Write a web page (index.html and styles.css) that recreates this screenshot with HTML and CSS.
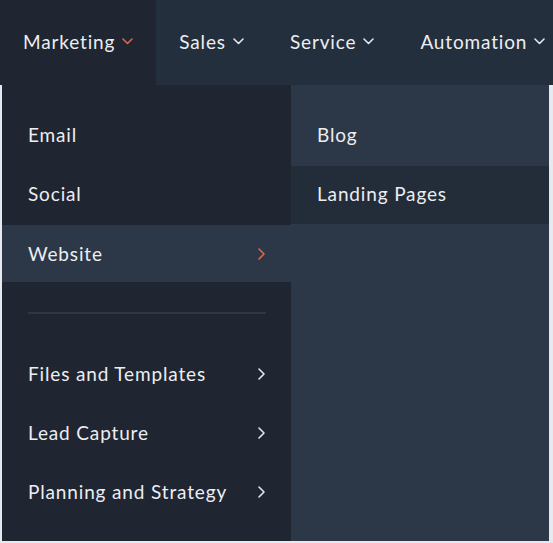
FILE: index.html
```html
<!DOCTYPE html>
<html>

<head>
    <meta name="viewport" content="width=device-width, initial-scale=1">
    <link rel="stylesheet" href="styles.css">
</head>

<body>

    <nav class="topnav">
        <a class="nav-item open">Marketing
            <svg class="caret-down" width="11" height="7" viewBox="0 0 11 7"><polyline points="1,1 5.5,5.5 10,1" /></svg>
        </a>
        <a class="nav-item">Sales
            <svg class="caret-down" width="11" height="7" viewBox="0 0 11 7"><polyline points="1,1 5.5,5.5 10,1" /></svg>
        </a>
        <a class="nav-item">Service
            <svg class="caret-down" width="11" height="7" viewBox="0 0 11 7"><polyline points="1,1 5.5,5.5 10,1" /></svg>
        </a>
        <a class="nav-item">Automation
            <svg class="caret-down" width="11" height="7" viewBox="0 0 11 7"><polyline points="1,1 5.5,5.5 10,1" /></svg>
        </a>
    </nav>

    <div class="dropdown">
        <ul class="menu">
            <li class="menu-item">Email</li>
            <li class="menu-item">Social</li>
            <li class="menu-item selected">Website
                <svg class="caret-right" width="7" height="12" viewBox="0 0 7 12"><polyline points="1,1 6,6 1,11" /></svg>
            </li>
            <li class="divider"></li>
            <li class="menu-item">Files and Templates
                <svg class="caret-right" width="7" height="12" viewBox="0 0 7 12"><polyline points="1,1 6,6 1,11" /></svg>
            </li>
            <li class="menu-item">Lead Capture
                <svg class="caret-right" width="7" height="12" viewBox="0 0 7 12"><polyline points="1,1 6,6 1,11" /></svg>
            </li>
            <li class="menu-item">Planning and Strategy
                <svg class="caret-right" width="7" height="12" viewBox="0 0 7 12"><polyline points="1,1 6,6 1,11" /></svg>
            </li>
        </ul>

        <ul class="submenu">
            <li class="sub-item">Blog</li>
            <li class="sub-item hover">Landing Pages</li>
        </ul>
    </div>

</body>

</html>
```

FILE: styles.css
```css
html, body {
    margin: 0;
    padding: 0;
}

body {
    width: 553px;
    height: 543px;
    overflow: hidden;
    background: #e6e9ee;
    font-family: Lato, "Open Sans", sans-serif;
    font-size: 19px;
    letter-spacing: 0.85px;
    color: #eceef1;
}

/* 상단 메뉴 바 */
.topnav {
    display: flex;
    height: 84px;
    padding-bottom: 1px;
    background: #242f3d;
}

.nav-item {
    display: flex;
    align-items: center;
    gap: 7px;
    padding: 0 23px 2px 23px;
    cursor: pointer;
}

.nav-item.open {
    background: #1f2531;
    padding-left: 23px;
    padding-right: 23px;
    margin-bottom: -1px;
}

.caret-down polyline,
.caret-right polyline {
    fill: none;
    stroke: #e3e6ea;
    stroke-width: 1.6;
    stroke-linecap: round;
    stroke-linejoin: round;
}

.open .caret-down polyline,
.selected .caret-right polyline {
    stroke: #e0654a;
}

/* 펼쳐진 드롭다운 */
.dropdown {
    display: flex;
    height: 456px;
    margin-left: 2px;
    width: 547px;
}

.menu, .submenu {
    list-style-type: none;
    margin: 0;
    padding: 0;
}

.menu {
    width: 289px;
    padding-top: 20px;
    background: #1f2531;
}

.menu-item {
    display: flex;
    align-items: center;
    justify-content: space-between;
    height: 59px;
    padding: 0 26px 0 26px;
    cursor: pointer;
}

.menu-item.selected {
    background: #2c3848;
    margin-top: 2px;
    height: 57px;
}

.divider {
    height: 2px;
    margin: 30px 25px 30px 26px;
    background: #2c3848;
}

.submenu {
    flex: 1;
    background: #2c3848;
}

.sub-item {
    display: flex;
    align-items: center;
    height: 58px;
    padding-left: 26px;
    padding-bottom: 3px;
    box-sizing: border-box;
    cursor: pointer;
}

.sub-item:first-child {
    height: 81px;
    align-items: flex-end;
    padding-bottom: 20px;
}

.sub-item.hover {
    background: #232d3a;
}
```
